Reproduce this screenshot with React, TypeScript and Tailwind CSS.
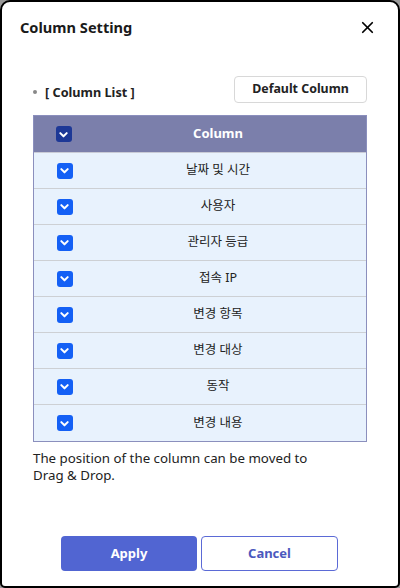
import { X } from 'lucide-react'

const ROWS = ['날짜 및 시간', '사용자', '관리자 등급', '접속 IP', '변경 항목', '변경 대상', '동작', '변경 내용']

function Check({ dark }: { dark?: boolean }) {
  return (
    <span
      className={`flex items-center justify-center w-[16px] h-[16px] rounded-[3px] ${
        dark ? 'bg-[#1d3896]' : 'bg-[#1460f5]'
      }`}
    >
      <svg width="11" height="11" viewBox="0 0 12 12" fill="none">
        <path d="M2.5 4.5 L6 8 L9.5 4.5" stroke="white" strokeWidth="2.2" strokeLinecap="round" strokeLinejoin="round" />
      </svg>
    </span>
  )
}

export default function App() {
  return (
    <div className="w-[400px] h-[588px] bg-[#9a9a9a]" style={{ fontFamily: '"Noto Sans", "Noto Sans CJK KR", sans-serif' }}>
      <div className="h-full flex flex-col bg-white border-2 border-black rounded-t-[10px] rounded-b-[5px] text-[#222]">
        {/* header */}
        <div className="flex items-center justify-between pl-[18px] pr-[21px] pt-[14px]">
          <h1 className="text-[14.6px] font-bold leading-[22px] text-[#1a1a1a]">Column Setting</h1>
          <X size={19} strokeWidth={2.2} className="text-black" />
        </div>

        <div className="px-[31px] mt-[38px]">
          <div className="flex items-center justify-between">
            <div className="flex items-center text-[12.7px] font-bold leading-[16px] pt-[4px]">
              <span className="w-[4px] h-[4px] rounded-full bg-[#888] mr-[8px]" />
              <span>[ Column List ]</span>
            </div>
            <button className="w-[133px] h-[27px] border border-[#d8d8d8] rounded-[4px] text-[12.4px] font-bold leading-none">
              Default Column
            </button>
          </div>

          {/* table */}
          <div className="mt-[12px] border border-[#8b8fbd]">
            <div className="flex items-center h-[37px] bg-[#7b7fab] text-white text-[13px] font-bold border-b border-[#c9cbd6]">
              <div className="w-[60px] flex justify-center pr-[1px]">
                <Check dark />
              </div>
              <div className="flex-1 text-center pr-[24px]">Column</div>
            </div>
            {ROWS.map((r, i) => (
              <div
                key={r}
                className={`flex items-center h-[36px] bg-[#e8f2fd] text-[12.5px] text-[#222] ${
                  i < ROWS.length - 1 ? 'border-b border-[#cdd0d4]' : ''
                }`}
              >
                <div className="w-[60px] flex justify-center pl-[1px]">
                  <Check />
                </div>
                <div className="flex-1 text-center pr-[24px]">{r}</div>
              </div>
            ))}
          </div>

          <p className="mt-[8px] text-[13.3px] leading-[17px] text-[#222]">
            The position of the column can be moved to
            <br />
            Drag &amp; Drop.
          </p>
        </div>

        <div className="mt-auto mb-[15px] flex justify-center gap-[4px] pr-[1px]">
          <button className="w-[136px] h-[35px] rounded-[4px] bg-[#5165d2] text-white text-[13px] font-bold">Apply</button>
          <button className="w-[137px] h-[35px] rounded-[4px] border border-[#5b6ad6] bg-white text-[#4b58be] text-[13px] font-bold">
            Cancel
          </button>
        </div>
      </div>
    </div>
  )
}
